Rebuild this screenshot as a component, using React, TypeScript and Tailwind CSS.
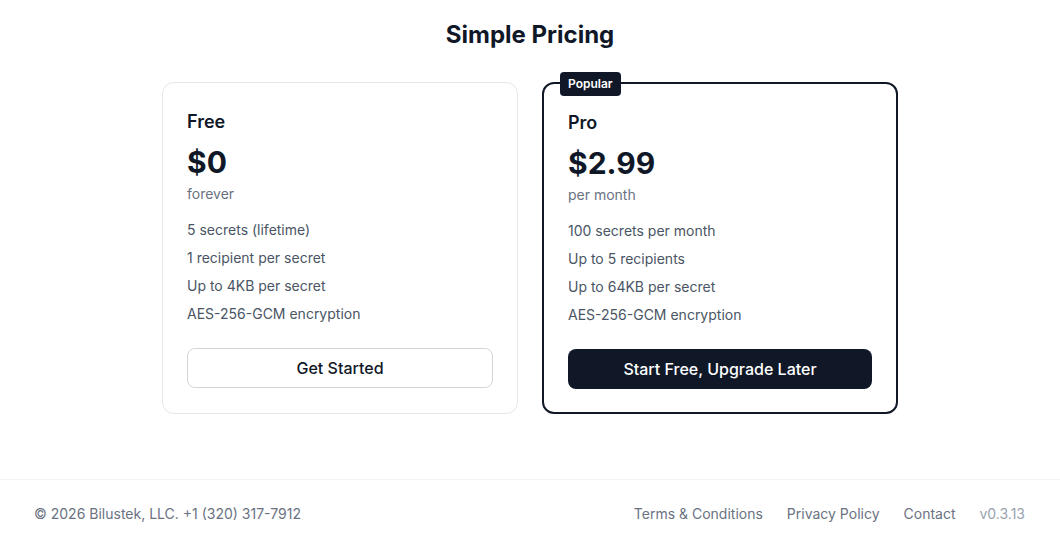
import { useState } from "react"

interface Plan {
  name: string
  price: string
  period: string
  features: string[]
  cta: string
  popular?: boolean
}

const plans: Plan[] = [
  {
    name: "Free",
    price: "$0",
    period: "forever",
    features: ["5 secrets (lifetime)", "1 recipient per secret", "Up to 4KB per secret", "AES-256-GCM encryption"],
    cta: "Get Started",
  },
  {
    name: "Pro",
    price: "$2.99",
    period: "per month",
    features: ["100 secrets per month", "Up to 5 recipients", "Up to 64KB per secret", "AES-256-GCM encryption"],
    cta: "Start Free, Upgrade Later",
    popular: true,
  },
]

function PlanCard({ plan }: { plan: Plan }) {
  return (
    <div
      className={
        plan.popular
          ? "relative rounded-xl border-2 border-gray-900 bg-white px-6 pt-[25px] pb-[23px]"
          : "relative rounded-xl border border-gray-200 bg-white px-6 pt-[25px] pb-[23px]"
      }
    >
      {plan.popular && (
        <span className="absolute -top-3 left-4 rounded bg-gray-900 px-2 py-1 text-xs font-semibold leading-4 text-white">
          Popular
        </span>
      )}
      <h3 className="text-lg font-semibold leading-7 text-gray-900">{plan.name}</h3>
      <div className="mt-2 text-3xl font-bold leading-9 text-gray-900">{plan.price}</div>
      <div className="mt-1 text-sm text-gray-500">{plan.period}</div>
      <ul className="mt-4 space-y-2 text-sm text-gray-600">
        {plan.features.map((f) => (
          <li key={f}>{f}</li>
        ))}
      </ul>
      <button
        className={
          plan.popular
            ? "mt-6 flex h-10 w-full items-center justify-center rounded-lg bg-gray-900 text-base font-medium text-white"
            : "mt-6 flex h-10 w-full items-center justify-center rounded-lg border border-gray-300 bg-white text-base font-medium text-gray-900"
        }
      >
        {plan.cta}
      </button>
    </div>
  )
}

export default function App() {
  const [year] = useState(2026)

  return (
    <div
      className="flex min-h-screen flex-col bg-white"
      style={{ fontFamily: "Inter, 'Noto Sans', sans-serif" }}
    >
      <main className="flex-1 pt-[19px]">
        <h2 className="text-center text-2xl font-bold leading-8 text-gray-900">Simple Pricing</h2>
        <div className="mx-auto mt-[31px] grid max-w-3xl grid-cols-2 gap-6 px-4">
          {plans.map((p) => (
            <PlanCard key={p.name} plan={p} />
          ))}
        </div>
      </main>
      <footer className="flex items-center justify-between border-t border-gray-100 py-6 pl-[34px] pr-[35px] text-sm leading-5 text-gray-500">
        <span>© {year} Bilustek, LLC. +1 (320) 317-7912</span>
        <nav className="flex items-center gap-6">
          <a href="#">Terms &amp; Conditions</a>
          <a href="#">Privacy Policy</a>
          <a href="#">Contact</a>
          <span className="text-gray-400">v0.3.13</span>
        </nav>
      </footer>
    </div>
  )
}
